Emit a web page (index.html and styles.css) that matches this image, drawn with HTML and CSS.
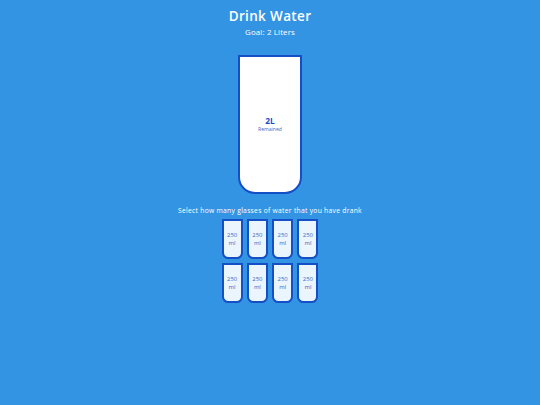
FILE: index.html
```html
<!DOCTYPE html>
<html lang="en">
<head>
<meta charset="UTF-8">
<title>Drink Water</title>
<link rel="stylesheet" href="styles.css">
</head>
<body>
<h1 class="title">Drink Water</h1>
<h3 class="goal">Goal: 2 Liters</h3>
<div class="cup">
  <div class="percentage"></div>
  <div class="remained">
    <span class="liters">2L</span>
    <small class="remained-label">Remained</small>
  </div>
</div>
<p class="text">Select how many glasses of water that you have drank</p>
<div class="cups">
  <div class="cup cup-small">250 ml</div>
  <div class="cup cup-small">250 ml</div>
  <div class="cup cup-small">250 ml</div>
  <div class="cup cup-small">250 ml</div>
  <div class="cup cup-small">250 ml</div>
  <div class="cup cup-small">250 ml</div>
  <div class="cup cup-small">250 ml</div>
  <div class="cup cup-small">250 ml</div>
</div>
</body>
</html>
```

FILE: styles.css
```css
* {
  box-sizing: border-box;
}

html {
  background-color: #3494e4;
}

body {
  background-color: #3494e4;
  color: #fff;
  font-family: "Open Sans", "DejaVu Sans", sans-serif;
  display: flex;
  flex-direction: column;
  align-items: center;
  margin: 3.4px;
  margin-bottom: 17px;
}

.title {
  font-size: 13.5px;
  font-weight: 600;
  line-height: 16.5px;
  margin: 4.2px 0 0;
  letter-spacing: 0.35px;
}

.goal {
  font-size: 7.9px;
  font-weight: 400;
  line-height: 9.6px;
  margin: 4.2px 0;
  letter-spacing: 0.15px;
}

.cup {
  background-color: #fff;
  border: 2px solid #144fc6;
  color: #144fc6;
  border-radius: 0 0 17px 17px;
  height: 139.2px;
  width: 63.3px;
  margin: 12.7px 0;
  display: flex;
  flex-direction: column;
  align-items: center;
  justify-content: center;
  overflow: hidden;
}

.cup.cup-small {
  height: 40px;
  width: 21.1px;
  border-radius: 0 0 6.3px 6.3px;
  background-color: rgba(255, 255, 255, 0.9);
  color: #3a68c8;
  font-size: 5.9px;
  line-height: 8px;
  text-align: center;
  margin: 2.1px;
  padding: 0 3px;
}

.cups {
  display: flex;
  flex-wrap: wrap;
  align-items: center;
  justify-content: center;
  width: 118px;
}

.percentage {
  height: 0;
}

.remained {
  display: flex;
  flex-direction: column;
  align-items: center;
  justify-content: center;
  text-align: center;
  flex: 1;
}

.liters {
  font-size: 8.4px;
  font-weight: 700;
  line-height: 10px;
}

.remained-label {
  font-size: 5.1px;
  line-height: 6.2px;
  color: #3a68c8;
}

.text {
  font-size: 6.75px;
  line-height: 8.2px;
  text-align: center;
  margin: 0 0 2.1px;
  letter-spacing: 0.27px;
}
```
